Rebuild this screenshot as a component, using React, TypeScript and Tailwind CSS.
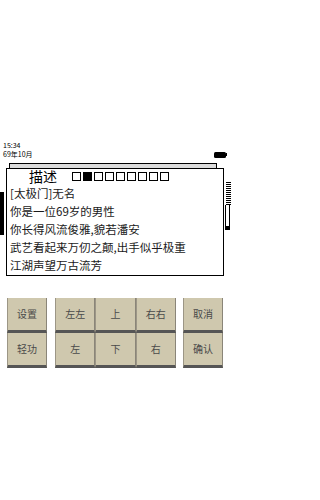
import React from "react";

const LINES = [
  "[太极门]无名",
  "你是一位69岁的男性",
  "你长得风流俊雅,貌若潘安",
  "武艺看起来万仞之颠,出手似乎极重",
  "江湖声望万古流芳",
];

const FONT = { fontFamily: '"Noto Sans CJK SC", "Noto Sans", sans-serif' };

function Key({ label, grow }: { label: string; grow?: boolean }) {
  return (
    <button
      className={
        (grow ? "flex-1 " : "w-[40px] ") +
        "h-[35px] bg-[#cfc8ae] border-l border-r border-l-[#9c9686] border-r-[#8a8578] border-b-[3px] border-b-[#555555] flex items-center justify-center text-[10px] text-[#4a4a4a] leading-none"
      }
    >
      {label}
    </button>
  );
}

export default function App() {
  return (
    <div className="w-[231px] h-[500px] bg-white overflow-hidden text-black" style={FONT}>
      {/* status */}
      <div className="pt-[141px] px-[3px] text-[7px] leading-[9px]">
        <div>15:34</div>
        <div className="flex items-center justify-between">
          <span>69年10月</span>
          <div className="flex items-center mr-[1px]">
            <div className="w-[12px] h-[6px] bg-black rounded-[1.5px]" />
            <div className="w-[1px] h-[3px] bg-black" />
          </div>
        </div>
      </div>

      {/* back tab */}
      <div className="mt-[4px] ml-[9px] w-[208px] h-[5px] border-t border-l border-r border-black bg-[#dcdcdc]" />

      {/* panel row */}
      <div className="flex">
        <div className="w-[6px]">
          <div className="mt-[24px] w-[4px] h-[43px] bg-black" />
        </div>
        <div className="w-[218px] h-[108px] border-[1.5px] border-black bg-white px-[3px]">
          <div className="h-[15px] flex items-center">
            <span className="ml-[19px] text-[14px] leading-[15px]">描述</span>
            <div className="ml-[15px] flex gap-[2px]">
              {Array.from({ length: 9 }).map((_, i) => (
                <div
                  key={i}
                  className={
                    i === 1
                      ? "w-[9px] h-[9px] shrink-0 border-[1.5px] border-black bg-black"
                      : "w-[9px] h-[9px] shrink-0 border-[1.5px] border-black bg-white"
                  }
                />
              ))}
            </div>
          </div>
          <div className="text-[11.5px] leading-[18px] text-[#1a1a1a]">
            {LINES.map((l) => (
              <div key={l} className="whitespace-nowrap">{l}</div>
            ))}
          </div>
        </div>
        <div className="w-[7px]">
          <div className="mt-[14px] ml-[2px] w-[5px] h-[23px] bg-[repeating-linear-gradient(to_bottom,#000_0px,#000_1px,#fff_1px,#fff_2px)]" />
          <div className="ml-[1px] w-[5px] h-[25px] border border-black border-t-0 flex flex-col justify-end">
            <div className="w-[3px] h-[3px] bg-black" />
          </div>
        </div>
      </div>

      {/* controls */}
      <div className="mt-[22px] px-[7px] flex gap-[8px]">
        <div className="flex flex-col">
          <Key label="设置" />
          <Key label="轻功" />
        </div>
        <div className="w-[121px] flex flex-col">
          <div className="flex">
            <Key label="左左" grow />
            <Key label="上" grow />
            <Key label="右右" grow />
          </div>
          <div className="flex">
            <Key label="左" grow />
            <Key label="下" grow />
            <Key label="右" grow />
          </div>
        </div>
        <div className="flex flex-col -ml-[1px]">
          <Key label="取消" />
          <Key label="确认" />
        </div>
      </div>
    </div>
  );
}
